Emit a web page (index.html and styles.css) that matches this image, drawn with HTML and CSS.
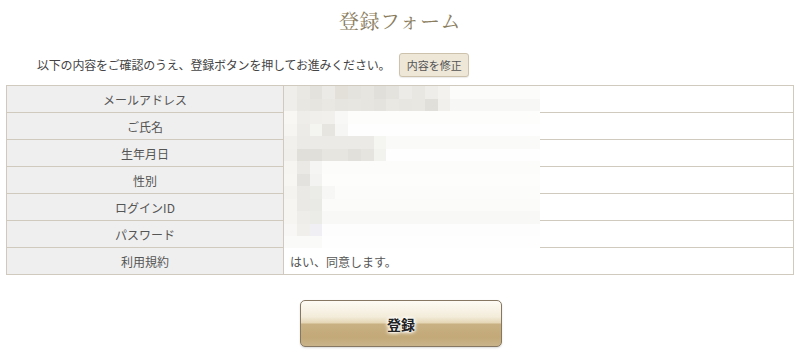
FILE: index.html
```html
<!DOCTYPE html>
<html lang="ja">
<head>
<meta charset="utf-8">
<title>登録フォーム</title>
<link rel="stylesheet" href="styles.css">
</head>
<body>
<div class="page">
  <h1 class="title">登録フォーム</h1>
  <div class="intro">
    <p class="intro-text">以下の内容をご確認のうえ、登録ボタンを押してお進みください。</p>
    <button class="edit-btn" type="button">内容を修正</button>
  </div>
  <div class="table-wrap">
    <table class="confirm">
      <tr><th>メールアドレス</th><td></td></tr>
      <tr><th>ご氏名</th><td></td></tr>
      <tr><th>生年月日</th><td></td></tr>
      <tr><th>性別</th><td></td></tr>
      <tr><th>ログインID</th><td></td></tr>
      <tr><th>パスワード</th><td></td></tr>
      <tr><th>利用規約</th><td>はい、同意します。</td></tr>
    </table>
    <div class="mosaic" aria-hidden="true">
      <div class="m r0"></div><div class="m r1"></div><div class="m r2"></div><div class="m r3"></div>
      <div class="m r4"></div><div class="m r5"></div><div class="m r6"></div><div class="m r7"></div>
      <div class="m r8"></div><div class="m r9"></div><div class="m r10"></div><div class="m r11"></div>
      <div class="m r12"></div>
    </div>
  </div>
  <div class="submit-row">
    <button class="submit-btn" type="button">登録</button>
  </div>
</div>
</body>
</html>
```

FILE: styles.css
```css
html, body {
  margin: 0;
  padding: 0;
  background: #ffffff;
}
body {
  font-family: "Noto Sans CJK JP", "Noto Sans", sans-serif;
  color: #444;
}
.page {
  width: 800px;
  height: 362px;
  overflow: hidden;
}
.title {
  margin: 9px 0 0;
  height: 24px;
  line-height: 24px;
  text-align: center;
  font-family: "Noto Serif CJK JP", "Liberation Serif", "Noto Sans CJK JP", serif;
  font-size: 20px;
  font-weight: normal;
  color: #8a7d5e;
  letter-spacing: 0.5px;
}
.intro {
  display: flex;
  align-items: center;
  margin-top: 20px;
  padding-left: 37px;
  height: 24px;
}
.intro-text {
  margin: 0;
  font-size: 12px;
  line-height: 16px;
  color: #444;
  letter-spacing: -0.2px;
}
.edit-btn {
  margin-left: 9px;
  width: 70px;
  height: 24px;
  padding: 0;
  font-family: "Noto Sans CJK JP", sans-serif;
  font-size: 11px;
  color: #555;
  background: #eee7d8;
  border: 1px solid #cdc3ad;
  border-radius: 3px;
  box-shadow: 0 1px 1px rgba(0,0,0,0.08);
}
.table-wrap {
  position: relative;
  margin: 8px 0 0 6px;
  width: 788px;
}
.confirm {
  width: 788px;
  border-collapse: collapse;
  table-layout: fixed;
  border: 1px solid #cfcabd;
}
.confirm th, .confirm td {
  height: 26px;
  padding: 0;
  border: 1px solid #cfcabd;
  font-size: 12px;
  font-weight: normal;
  color: #555;
}
.confirm th {
  width: 276px;
  background: #efefef;
  text-align: center;
}
.confirm td {
  background: #fff;
  text-align: left;
  padding-left: 6px;
}
.mosaic {
  position: absolute;
  left: 278px;
  top: 1px;
  width: 256px;
  display: flex;
  flex-direction: column;
}
.m {
  height: 12.5px;
}
.r0 { background: linear-gradient(to right,
  #efeeea 0 5%, #e9e8e3 5% 10%, #e3e2dd 10% 15%, #ebeae6 15% 20%, #e2e0d9 20% 25%,
  #e5e3dd 25% 30%, #e7e5df 30% 35%, #e0dfd9 35% 40%, #e4e3dd 40% 45%, #ecebe7 45% 50%,
  #e8e7e2 50% 55%, #eeede9 55% 60%, #f3f2ef 60% 65%, #fcfcfb 65% 100%); }
.r1 { background: linear-gradient(to right,
  #efeeea 0 5%, #e8e7e2 5% 10%, #e6e5e0 10% 15%, #e9e8e3 15% 20%, #e6e5e0 20% 25%,
  #e7e6e1 25% 30%, #e6e5e0 30% 35%, #e4e3de 35% 40%, #e9e8e3 40% 45%, #e7e6e1 45% 50%,
  #e8e7e2 50% 55%, #e0dfd9 55% 60%, #f1f0ed 60% 65%, #f7f7f5 65% 100%); }
.r2 { background: linear-gradient(to right,
  #f8f7f4 0 5%, #eeede9 5% 10%, #f0efeb 10% 15%, #f1f0ed 15% 20%, #f8f8f6 20% 25%, #fdfdfc 25% 100%); }
.r3 { background: linear-gradient(to right,
  #f6f5f2 0 5%, #ecebe7 5% 10%, #f4f4f1 10% 15%, #e6e5e0 15% 20%, #f6f6f4 20% 25%, #fefefe 25% 100%); }
.r4 { background: linear-gradient(to right,
  #f1f0ec 0 5%, #eceae6 5% 35%, #f5f5f2 35% 40%, #fafaf8 40% 100%); }
.r5 { background: linear-gradient(to right,
  #f0efeb 0 5%, #e0dfda 5% 15%, #e6e5e0 15% 25%, #e2e0da 25% 30%, #e6e4df 30% 35%, #f2f2ef 35% 40%, #fefefe 40% 100%); }
.r6 { background: linear-gradient(to right,
  #f6f5f2 0 5%, #eae9e5 5% 10%, #f5f5f3 10% 15%, #fcfcfb 15% 100%); }
.r7 { background: linear-gradient(to right,
  #f7f6f3 0 5%, #e3e2de 5% 10%, #f3f3f1 10% 15%, #fdfdfc 15% 100%); }
.r8 { background: linear-gradient(to right,
  #f4f3f0 0 5%, #ebe9e5 5% 10%, #ebebe7 10% 15%, #f7f7f5 15% 20%, #fcfcfb 20% 100%); }
.r9 { background: linear-gradient(to right,
  #f6f5f2 0 5%, #eae9e5 5% 10%, #e9e9e5 10% 15%, #fbfbfa 15% 100%); }
.r10 { background: linear-gradient(to right,
  #f6f5f2 0 5%, #eeede9 5% 10%, #ebebe7 10% 15%, #f8f8f7 15% 100%); }
.r11 { background: linear-gradient(to right,
  #f8f7f5 0 5%, #f0efec 5% 10%, #f0f0f4 10% 15%, #fdfdfd 15% 100%); }
.r12 { height: 12px; background: linear-gradient(to right,
  #fafaf8 0 15%, #fefefe 15% 100%); }
.submit-row {
  margin-top: 25px;
  padding-left: 300px;
}
.submit-btn {
  width: 202px;
  height: 47px;
  padding: 0;
  border: 1px solid #857761;
  border-radius: 5px;
  background: linear-gradient(to bottom, #fdfbf5 0%, #f3ecda 35%, #e4d6b4 49%, #c9b184 51%, #c3a978 80%, #c9b38a 100%);
  box-shadow: 0 1px 2px rgba(0,0,0,0.15);
  font-family: "Noto Sans CJK JP", sans-serif;
  font-size: 14px;
  font-weight: bold;
  color: #222;
  text-shadow: 0 0 2px #fff, 0 0 3px #fff, 0 0 4px #fff, 0 0 5px #fff;
}
```
